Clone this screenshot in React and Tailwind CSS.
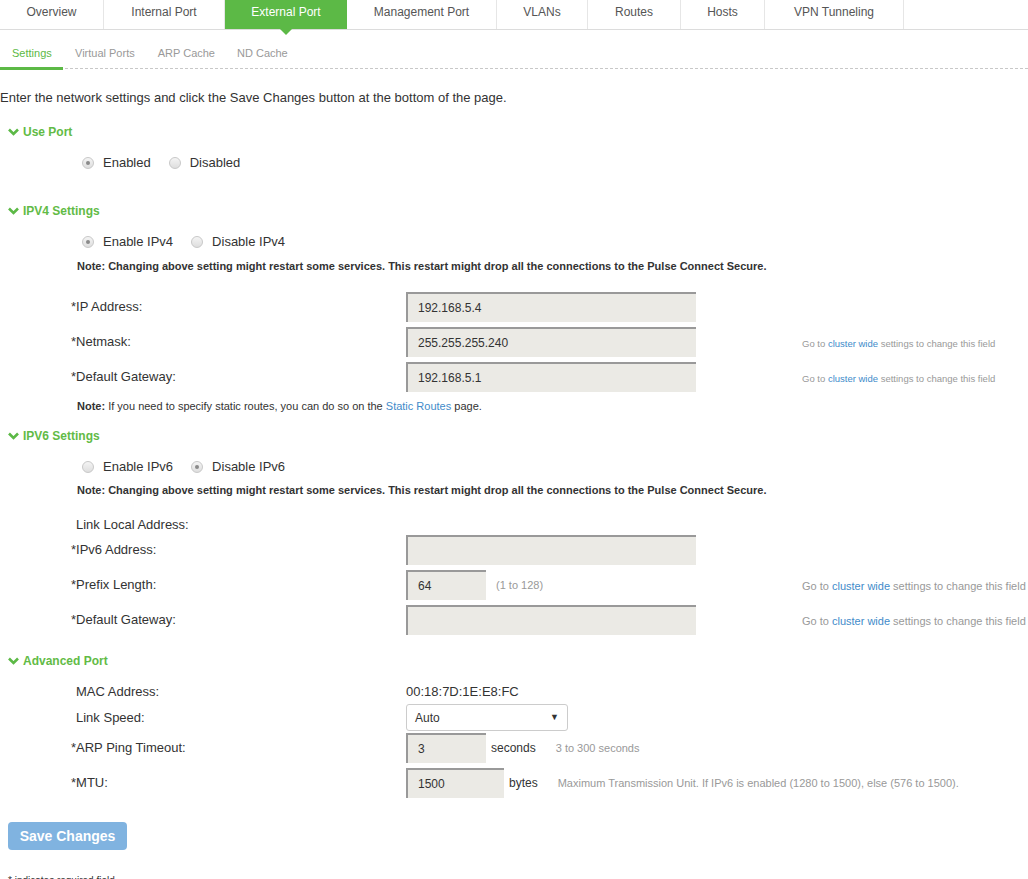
import React from 'react';

const GREEN = '#5cb946';

const tabs = [
  { label: 'Overview', w: 'w-[104px]' },
  { label: 'Internal Port', w: 'w-[121px]' },
  { label: 'External Port', w: 'w-[122px]', active: true },
  { label: 'Management Port', w: 'w-[150px]' },
  { label: 'VLANs', w: 'w-[91px]' },
  { label: 'Routes', w: 'w-[93px]' },
  { label: 'Hosts', w: 'w-[84px]' },
  { label: 'VPN Tunneling', w: 'w-[139px]' },
];

const Chevron = () => (
  <svg width="11" height="8" viewBox="0 0 11 8" className="mr-[4px]">
    <path d="M1 1.5 L5.5 6 L10 1.5" fill="none" stroke={GREEN} strokeWidth="2.6" />
  </svg>
);

const SectionHeader = ({ title, className }) => (
  <div className={`flex items-center pl-[8px] leading-[16px] text-[12px] font-bold text-[#62bb46] ${className}`}>
    <Chevron />
    <span>{title}</span>
  </div>
);

const Radio = ({ checked }) => (
  <span className="inline-flex w-[12px] h-[12px] rounded-full border border-[#c8c8c8] bg-gradient-to-b from-[#f4f4f4] to-[#dedede] items-center justify-center">
    {checked && <span className="w-[4px] h-[4px] rounded-full bg-[#8a8a8a]" />}
  </span>
);

const RadioGroup = ({ options, className }) => (
  <div className={`flex items-center pl-[82px] leading-[16px] text-[13px] text-[#333] ${className}`}>
    {options.map((o, i) => (
      <span key={i} className="flex items-center mr-[18px]">
        <Radio checked={o.checked} />
        <span className="ml-[9px]">{o.label}</span>
      </span>
    ))}
  </div>
);

const NoteRestart = ({ className }) => (
  <div className={`pl-[77px] text-[11px] leading-[14px] font-bold text-[#333] whitespace-nowrap ${className}`}>
    Note: Changing above setting might restart some services. This restart might drop all the connections to the Pulse Connect Secure.
  </div>
);

const Input = ({ value, w = 'w-[290px]', h = 'h-[30px]' }) => (
  <div className={`${w} ${h} shrink-0 bg-[#ebeae5] border-t-2 border-l-2 border-[#999] flex items-center pl-[10px] text-[12px] text-[#333]`}>
    {value}
  </div>
);

const Cluster = ({ size }) => (
  <span className={`${size} text-[#999]`}>
    Go to <span className="text-[#428bca]">cluster wide</span> settings to change this field
  </span>
);

const Row = ({ label, star = true, children, hint, className = '' }) => (
  <div className={`grid grid-cols-[406px_396px_1fr] items-center ${className}`}>
    <div className={`text-[13px] text-[#333] ${star ? 'pl-[71px]' : 'pl-[76px]'}`}>
      {star ? '*' : ''}{label}
    </div>
    <div className="flex items-center">{children}</div>
    <div className="whitespace-nowrap">{hint}</div>
  </div>
);

export default function App() {
  return (
    <div className="w-[1028px] h-[879px] overflow-hidden bg-white" style={{ fontFamily: '"Liberation Sans", Arial, sans-serif' }}>
      {/* top tabs */}
      <div className="flex h-[30px] border-b border-[#dcdcdc]">
        {tabs.map((t) => (
          <div
            key={t.label}
            className={`${t.w} relative h-[29px] flex justify-center pt-[4px] leading-[16px] text-[12px] ${
              t.active ? 'bg-[#5cb946] text-white' : 'text-[#555] border-r border-[#e6e6e6]'
            }`}
          >
            {t.label}
            {t.active && (
              <span className="absolute left-1/2 -translate-x-1/2 top-[29px] w-0 h-0 border-l-[6px] border-r-[6px] border-t-[6px] border-l-transparent border-r-transparent border-t-[#5cb946]" />
            )}
          </div>
        ))}
      </div>

      {/* sub tabs */}
      <div className="flex items-end h-[39px] border-b border-dashed border-[#c8c8c8] text-[11px] leading-[14px]">
        <div className="relative w-[63px] pl-[12px] pb-[8px] text-[#5cb946]">
          Settings
          <span className="absolute left-0 right-0 bottom-[-2px] h-[3px] bg-[#5cb946]" />
        </div>
        <div className="pl-[12px] pb-[8px] text-[#999]">Virtual Ports</div>
        <div className="pl-[23px] pb-[8px] text-[#999]">ARP Cache</div>
        <div className="pl-[22px] pb-[8px] text-[#999]">ND Cache</div>
      </div>

      <div className="mt-[21px] leading-[16px] text-[13px] text-[#333]">
        Enter the network settings and click the Save Changes button at the bottom of the page.
      </div>

      <SectionHeader title="Use Port" className="mt-[18px]" />
      <RadioGroup className="mt-[15px]" options={[{ label: 'Enabled', checked: true }, { label: 'Disabled' }]} />

      <SectionHeader title="IPV4 Settings" className="mt-[32px]" />
      <RadioGroup className="mt-[15px]" options={[{ label: 'Enable IPv4', checked: true }, { label: 'Disable IPv4' }]} />
      <NoteRestart className="mt-[9px]" />

      <Row label="IP Address:" className="mt-[19px]">
        <Input value="192.168.5.4" />
      </Row>
      <Row label="Netmask:" className="mt-[5px]" hint={<Cluster size="text-[9.5px]" />}>
        <Input value="255.255.255.240" />
      </Row>
      <Row label="Default Gateway:" className="mt-[5px]" hint={<Cluster size="text-[9.5px]" />}>
        <Input value="192.168.5.1" />
      </Row>
      <div className="mt-[7px] pl-[77px] text-[11px] leading-[14px] text-[#333]">
        <b>Note:</b> If you need to specify static routes, you can do so on the{' '}
        <span className="text-[#428bca]">Static Routes</span> page.
      </div>

      <SectionHeader title="IPV6 Settings" className="mt-[15px]" />
      <RadioGroup className="mt-[15px]" options={[{ label: 'Enable IPv6' }, { label: 'Disable IPv6', checked: true }]} />
      <NoteRestart className="mt-[8px]" />

      <div className="mt-[20px] pl-[76px] leading-[16px] text-[13px] text-[#333]">Link Local Address:</div>
      <Row label="IPv6 Address:" className="mt-[2px]">
        <Input value="" />
      </Row>
      <Row label="Prefix Length:" className="mt-[5px]" hint={<Cluster size="text-[11px]" />}>
        <Input value="64" w="w-[80px]" />
        <span className="ml-[10px] text-[11px] text-[#999]">(1 to 128)</span>
      </Row>
      <Row label="Default Gateway:" className="mt-[5px]" hint={<Cluster size="text-[11px]" />}>
        <Input value="" />
      </Row>

      <SectionHeader title="Advanced Port" className="mt-[18px]" />
      <Row label="MAC Address:" star={false} className="mt-[15px] leading-[16px]">
        <span className="text-[13px] text-[#333]">00:18:7D:1E:E8:FC</span>
      </Row>
      <Row label="Link Speed:" star={false} className="mt-[4px]">
        <div className="w-[162px] h-[27px] border border-[#ccc] rounded-[3px] bg-white flex items-center justify-between pl-[8px] pr-[8px] text-[12px] text-[#333]">
          <span>Auto</span>
          <span className="text-[9px]">▼</span>
        </div>
      </Row>
      <Row label="ARP Ping Timeout:" className="mt-[2px]">
        <Input value="3" w="w-[80px]" />
        <span className="ml-[5px] text-[12px] text-[#333]">seconds</span>
        <span className="ml-[20px] text-[11px] text-[#999] whitespace-nowrap">3 to 300 seconds</span>
      </Row>
      <Row label="MTU:" className="mt-[5px]">
        <Input value="1500" w="w-[98px]" />
        <span className="ml-[5px] text-[12px] text-[#333]">bytes</span>
        <span className="ml-[20px] text-[11px] text-[#999] whitespace-nowrap">
          Maximum Transmission Unit. If IPv6 is enabled (1280 to 1500), else (576 to 1500).
        </span>
      </Row>

      <div className="mt-[24px] pl-[8px]">
        <button className="w-[119px] h-[28px] rounded-[4px] bg-[#80b3e0] text-white text-[14px] font-bold">
          Save Changes
        </button>
      </div>

      <div className="mt-[24px] pl-[8px] text-[10px] leading-[14px] text-[#333]">* indicates required field</div>
    </div>
  );
}
